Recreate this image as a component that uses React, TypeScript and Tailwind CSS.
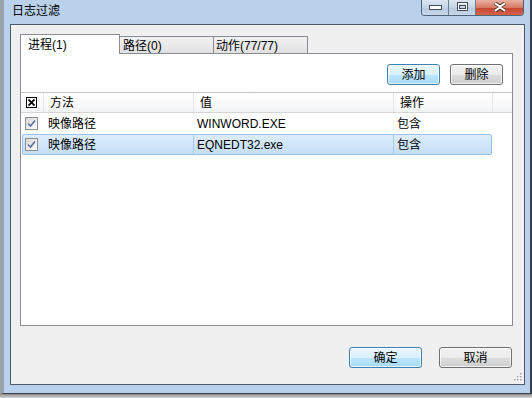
import React from 'react';

type Row = { method: string; value: string; op: string; selected: boolean };

const rows: Row[] = [
  { method: '映像路径', value: 'WINWORD.EXE', op: '包含', selected: false },
  { method: '映像路径', value: 'EQNEDT32.exe', op: '包含', selected: true },
];

const WinButton: React.FC<{ label: string; primary?: boolean; className?: string }> = ({ label, primary, className }) => (
  <div
    className={
      primary
        ? `h-[21px] rounded-[3px] border border-[#3c7fb1] bg-[linear-gradient(#eaf6fd_0%,#d9f0fc_50%,#bee6fd_50%,#a7d9f5_100%)] shadow-[inset_0_0_0_1px_rgba(255,255,255,0.7)] flex items-center justify-center text-[12px] text-black ${className ?? ''}`
        : `h-[21px] rounded-[3px] border border-[#707070] bg-[linear-gradient(#f2f2f2_0%,#ebebeb_50%,#dddddd_50%,#cfcfcf_100%)] shadow-[inset_0_0_0_1px_rgba(255,255,255,0.7)] flex items-center justify-center text-[12px] text-black ${className ?? ''}`
    }
  >
    {label}
  </div>
);

const CheckMark: React.FC = () => (
  <div className="w-[13px] h-[13px] border border-[#8e8f8f] bg-[linear-gradient(135deg,#d6d6d6,#ffffff)] flex items-center justify-center">
    <svg width="9" height="9" viewBox="0 0 9 9">
      <path d="M1 4.5 L3.5 7 L8 1.5" fill="none" stroke="#5a6fa3" strokeWidth="1.6" />
    </svg>
  </div>
);

const HeaderCheck: React.FC = () => (
  <div className="w-[11px] h-[11px] border border-black bg-white flex items-center justify-center">
    <svg width="7" height="7" viewBox="0 0 7 7">
      <path d="M0.5 0.5 L6.5 6.5 M6.5 0.5 L0.5 6.5" stroke="#000" strokeWidth="1.8" />
    </svg>
  </div>
);

const CaptionButtons: React.FC = () => (
  <div className="flex h-[16px] border border-t-0 border-[#4f6379] rounded-b-[4px] overflow-hidden">
    <div className="w-[27px] h-full bg-[linear-gradient(#dde7f2,#c5d4e5_50%,#b6c9de_51%,#c9d8ea)] flex items-center justify-center border-r border-[#6d7f94]">
      <svg width="13" height="5" viewBox="0 0 13 5">
        <rect x="0.5" y="0.5" width="12" height="4" fill="#fff" stroke="#3f4d5d" />
      </svg>
    </div>
    <div className="w-[27px] h-full bg-[linear-gradient(#dde7f2,#c5d4e5_50%,#b6c9de_51%,#c9d8ea)] flex items-start justify-center pt-[2px] border-r border-[#6d7f94]">
      <svg width="11" height="9" viewBox="0 0 11 9">
        <rect x="0.5" y="0.5" width="10" height="8" fill="none" stroke="#3f4d5d" />
        <rect x="1.5" y="1.5" width="8" height="6" fill="none" stroke="#fff" />
        <rect x="2.5" y="3.5" width="6" height="3" fill="none" stroke="#3f4d5d" />
      </svg>
    </div>
    <div className="w-[47px] h-full bg-[linear-gradient(#eab1a3,#d87a65_50%,#c7442f_51%,#d4644a)] flex items-start justify-center pt-[2px]">
      <svg width="16" height="10" viewBox="0 0 16 10">
        <path d="M2.5 1 L8 4.2 L13.5 1 M2.5 9 L8 5.8 L13.5 9" fill="none" stroke="#3a2a2a" strokeWidth="3.6" />
        <path d="M2.8 1.2 L8 4.5 L13.2 1.2 M2.8 8.8 L8 5.5 L13.2 8.8" fill="none" stroke="#fff" strokeWidth="2" />
      </svg>
    </div>
  </div>
);

const ResizeGrip: React.FC = () => (
  <svg width="10" height="10" viewBox="0 0 10 10" className="absolute right-[2px] bottom-[1px]">
    {[
      [8, 0],
      [8, 3],
      [5, 3],
      [8, 6],
      [5, 6],
      [2, 6],
    ].map(([x, y], i) => (
      <g key={i}>
        <rect x={x + 1} y={y + 1} width="1.5" height="1.5" fill="#fff" />
        <rect x={x} y={y} width="1.5" height="1.5" fill="#a3a3a3" />
      </g>
    ))}
  </svg>
);

export default function App() {
  return (
    <div className="w-[532px] h-[398px] bg-[#dcdcdc] flex flex-col font-['Liberation_Sans','Noto_Sans_CJK_SC',sans-serif] text-[12px] text-black overflow-hidden">
      <div className="h-[394px] flex flex-col border-l-4 border-l-[#9aa3ad] border-r-2 border-r-[#38414c] border-b border-b-[#38414c] bg-[#b9d1ea] pl-[6px] pr-[5px] pb-[8px]">
        {/* title bar */}
        <div className="h-[24px] flex items-start justify-between">
          <div className="ml-[2px] mt-[3px] leading-[16px] text-[12px]">日志过滤</div>
          <div className="mr-[1px]">
            <CaptionButtons />
          </div>
        </div>

        {/* client area */}
        <div className="flex-1 border border-[#4d5a69] bg-[#f0f0f0] flex flex-col relative">
          {/* tabs */}
          <div className="ml-[9px] mt-[9px] h-[19px] flex items-end relative z-10">
            <div className="w-[100px] h-[20px] -mb-px bg-white border-l border-t border-r border-[#898c95] pl-[7px] pt-[2px] leading-[16px]">
              进程(1)
            </div>
            <div className="w-[94px] h-[17px] border-t border-r border-[#898c95] bg-[linear-gradient(#f2f2f2,#e0e0e0)] pl-[3px] pt-[1px] leading-[16px]">
              路径(0)
            </div>
            <div className="w-[94px] h-[17px] border-t border-r border-[#898c95] bg-[linear-gradient(#f2f2f2,#e0e0e0)] pl-[2px] pt-[1px] leading-[16px]">
              动作(77/77)
            </div>
          </div>

          {/* tab panel */}
          <div className="ml-[9px] mr-[11px] h-[273px] border border-[#898c95] bg-white flex flex-col">
            <div className="mt-[10px] mr-[9px] flex justify-end gap-[10px]">
              <WinButton label="添加" primary className="w-[53px]" />
              <WinButton label="删除" className="w-[53px]" />
            </div>

            {/* list */}
            <div className="mt-[7px] flex flex-col">
              <div className="h-[21px] flex items-stretch border-t border-b border-t-[#c4c4c4] border-b-[#d5d5d5] bg-[linear-gradient(#ffffff,#f3f4f6)]">
                <div className="w-[23px] border-r border-[#e3e6e9] pl-[5px] flex items-center">
                  <HeaderCheck />
                </div>
                <div className="w-[150px] border-r border-[#e3e6e9] pl-[6px] flex items-center">方法</div>
                <div className="w-[200px] border-r border-[#e3e6e9] pl-[6px] flex items-center">值</div>
                <div className="w-[99px] border-r border-[#e3e6e9] pl-[6px] flex items-center">操作</div>
                <div className="flex-1" />
              </div>

              {rows.map((r, i) => (
                <div key={i} className="h-[21px] flex">
                  <div
                    className={
                      r.selected
                        ? 'ml-px w-[470px] h-full rounded-[2px] border border-[#9cc3ea] bg-[linear-gradient(#dcedfc,#c4def6)] flex items-center'
                        : 'ml-px w-[470px] h-full rounded-[2px] border border-transparent flex items-center'
                    }
                  >
                    <div className="w-[21px] pl-[2px] flex items-center">
                      <CheckMark />
                    </div>
                    <div className={r.selected ? 'w-[150px] h-full border-r border-[#a9cbed] pl-[4px] flex items-center' : 'w-[150px] h-full pl-[4px] flex items-center'}>
                      {r.method}
                    </div>
                    <div className={r.selected ? 'w-[200px] h-full border-r border-[#a9cbed] pl-[3px] flex items-center' : 'w-[200px] h-full pl-[3px] flex items-center'}>
                      {r.value}
                    </div>
                    <div className="flex-1 pl-[3px] flex items-center">{r.op}</div>
                  </div>
                </div>
              ))}
            </div>
          </div>

          {/* bottom buttons */}
          <div className="mt-[21px] mr-[12px] flex justify-end gap-[17px]">
            <WinButton label="确定" primary className="w-[73px]" />
            <WinButton label="取消" className="w-[73px]" />
          </div>

          <ResizeGrip />
        </div>
      </div>
      <div className="flex-1 bg-[linear-gradient(#8a8a8a,#d6d6d6)]" />
    </div>
  );
}
